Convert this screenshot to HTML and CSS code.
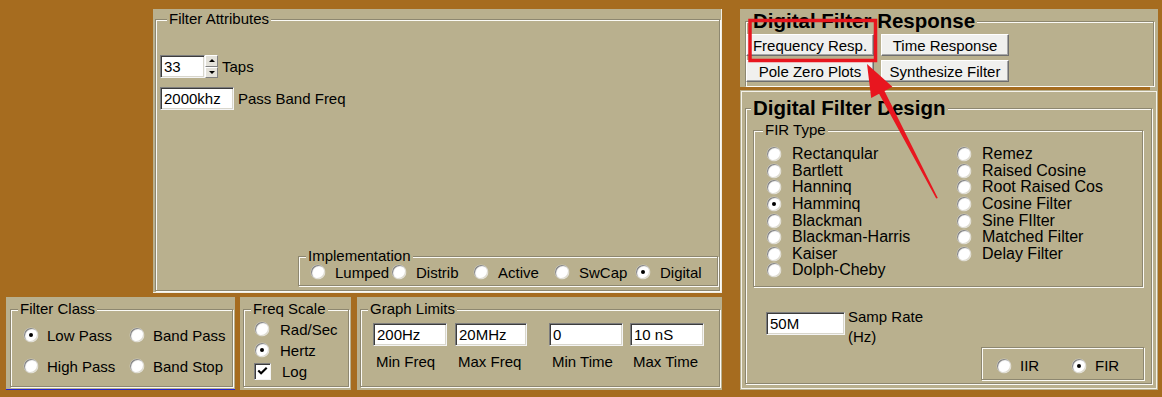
FILE: index.html
```html
<!DOCTYPE html>
<html>
<head>
<meta charset="utf-8">
<title>Digital Filter Design</title>
<link rel="stylesheet" href="styles.css">
</head>
<body>
<div class="app">
  <div class="left">
    <section class="panel attrs">
      <div class="group attrs-group">
        <div class="cap">Filter Attributes</div>
        <div class="field-row taps-row">
          <span class="input w45">33</span>
          <span class="spin"><span class="spin-btn up"></span><span class="spin-btn down"></span></span>
          <span class="lbl">Taps</span>
        </div>
        <div class="field-row pass-row">
          <span class="input w74">2000khz</span>
          <span class="lbl">Pass Band Freq</span>
        </div>
        <div class="group impl">
          <div class="cap">Implementation</div>
          <div class="impl-row">
            <span class="opt w81"><span class="radio"></span><span class="t">Lumped</span></span>
            <span class="opt w82"><span class="radio"></span><span class="t">Distrib</span></span>
            <span class="opt w81"><span class="radio"></span><span class="t">Active</span></span>
            <span class="opt w81"><span class="radio"></span><span class="t">SwCap</span></span>
            <span class="opt"><span class="radio on"></span><span class="t">Digital</span></span>
          </div>
        </div>
      </div>
    </section>

    <div class="bottom-row">
      <section class="panel class-panel">
        <div class="group class-group">
          <div class="cap">Filter Class</div>
          <div class="class-grid">
            <span class="opt"><span class="radio on"></span><span class="t">Low Pass</span></span>
            <span class="opt"><span class="radio"></span><span class="t">Band Pass</span></span>
            <span class="opt"><span class="radio"></span><span class="t">High Pass</span></span>
            <span class="opt"><span class="radio"></span><span class="t">Band Stop</span></span>
          </div>
        </div>
      </section>

      <section class="panel scale-panel">
        <div class="group scale-group">
          <div class="cap">Freq Scale</div>
          <div class="scale-list">
            <span class="opt"><span class="radio"></span><span class="t">Rad/Sec</span></span>
            <span class="opt"><span class="radio on"></span><span class="t">Hertz</span></span>
            <span class="opt chk-opt"><span class="check"><svg viewBox="0 0 16 16" width="16" height="16"><path d="M3.5 7.5 L6.5 10.5 L12.5 4.5" fill="none" stroke="#000" stroke-width="2.2"/></svg></span><span class="t">Log</span></span>
          </div>
        </div>
      </section>

      <section class="panel limits-panel">
        <div class="group limits-group">
          <div class="cap">Graph Limits</div>
          <div class="limits-row">
            <div class="limit"><span class="input w74">200Hz</span><span class="limit-lbl">Min Freq</span></div>
            <div class="limit g8"><span class="input w72">20MHz</span><span class="limit-lbl">Max Freq</span></div>
            <div class="limit g22"><span class="input w74">0</span><span class="limit-lbl">Min Time</span></div>
            <div class="limit g7"><span class="input w74">10 nS</span><span class="limit-lbl">Max Time</span></div>
          </div>
        </div>
      </section>
    </div>
  </div>

  <div class="right">
    <section class="panel response">
      <div class="group response-group">
        <div class="cap title">Digital Filter Response</div>
        <div class="btn-grid">
          <button class="btn">Frequency Resp.</button>
          <button class="btn">Time Response</button>
          <button class="btn">Pole Zero Plots</button>
          <button class="btn">Synthesize Filter</button>
        </div>
      </div>
    </section>
    <div class="sep"></div>
    <section class="panel design">
      <div class="group design-group">
        <div class="cap title design-title">Digital Filter Design</div>
        <div class="group fir">
          <div class="cap fir-cap">FIR Type</div>
          <div class="fir-grid">
            <span class="opt"><span class="radio"></span><span class="t">Rectanqular</span></span>
            <span class="opt"><span class="radio"></span><span class="t">Bartlett</span></span>
            <span class="opt"><span class="radio"></span><span class="t">Hanninq</span></span>
            <span class="opt"><span class="radio on"></span><span class="t">Hamminq</span></span>
            <span class="opt"><span class="radio"></span><span class="t">Blackman</span></span>
            <span class="opt"><span class="radio"></span><span class="t">Blackman-Harris</span></span>
            <span class="opt"><span class="radio"></span><span class="t">Kaiser</span></span>
            <span class="opt"><span class="radio"></span><span class="t">Dolph-Cheby</span></span>
            <span class="opt"><span class="radio"></span><span class="t">Remez</span></span>
            <span class="opt"><span class="radio"></span><span class="t">Raised Cosine</span></span>
            <span class="opt"><span class="radio"></span><span class="t">Root Raised Cos</span></span>
            <span class="opt"><span class="radio"></span><span class="t">Cosine Filter</span></span>
            <span class="opt"><span class="radio"></span><span class="t">Sine FIlter</span></span>
            <span class="opt"><span class="radio"></span><span class="t">Matched Filter</span></span>
            <span class="opt"><span class="radio"></span><span class="t">Delay Filter</span></span>
          </div>
        </div>
        <div class="samp-row">
          <span class="input w79">50M</span>
          <span class="samp-lbl">Samp Rate<br>(Hz)</span>
        </div>
        <div class="group mode">
          <span class="opt mode-iir"><span class="radio"></span><span class="t">IIR</span></span>
          <span class="opt"><span class="radio on"></span><span class="t">FIR</span></span>
        </div>
      </div>
    </section>
  </div>

  <svg class="annot" width="1162" height="397" viewBox="0 0 1162 397">
    <rect x="750" y="20.5" width="125.5" height="40" fill="none" stroke="#e8161f" stroke-width="3.5"/>
    <polygon fill="#e8161f" points="867,64 892.4,86.8 884.5,91 937.8,198 936.2,198.6 879.1,93.8 871.2,98"/>
  </svg>
</div>
</body>
</html>
```

FILE: styles.css
```css
* { box-sizing: border-box; }
html, body { margin: 0; padding: 0; }
body {
  background: #a66c1f;
  font-family: "Liberation Sans", Arial, sans-serif;
  font-size: 15px;
  color: #000;
  width: 1162px;
  height: 397px;
  overflow: hidden;
}
.app {
  position: relative;
  display: flex;
  padding-top: 9px;
  height: 397px;
}
.panel { background: #b9b08e; }

/* etched group box */
.group {
  border: 1px solid #8d8770;
  box-shadow: inset 1px 1px 0 #fbfaf5, 1px 1px 0 #fbfaf5;
}
.cap {
  display: table;
  margin: -9px 0 0 7px;
  padding: 0 2px;
  line-height: 16px;
  background: #b9b08e;
  white-space: nowrap;
}
.cap.title {
  font-weight: bold;
  font-size: 20.5px;
  line-height: 24px;
  margin: -13px 0 0 5px;
}

/* inputs */
.input {
  display: inline-block;
  height: 23px;
  background: #fff;
  border-top: 1px solid #7d7d7d;
  border-left: 1px solid #7d7d7d;
  border-right: 1px solid #f4f4f4;
  border-bottom: 1px solid #f4f4f4;
  box-shadow: inset 1px 1px 0 #3c3c3c, inset -1px -1px 0 #d8d6cc;
  padding: 2px 3px 0;
  line-height: 18px;
  white-space: nowrap;
}
.w45 { width: 45px; }
.w72 { width: 72px; }
.w74 { width: 74px; }
.w79 { width: 79px; }

/* radios */
.opt { display: inline-flex; align-items: center; white-space: nowrap; }
.radio {
  flex: none;
  position: relative;
  width: 14px;
  height: 14px;
  border-radius: 50%;
  background: #fff;
  box-shadow: inset 1px 1px 1px #7a7a7a, inset -1px -1px 0 #dedbd0, 0 0 0 0.5px #cfcab5;
}
.radio.on::after {
  content: "";
  position: absolute;
  left: 5px;
  top: 5px;
  width: 4px;
  height: 4px;
  border-radius: 50%;
  background: #000;
}
.check {
  flex: none;
  width: 17px;
  height: 17px;
  background: #fff;
  border-top: 1px solid #7d7d7d;
  border-left: 1px solid #7d7d7d;
  border-right: 1px solid #f4f4f4;
  border-bottom: 1px solid #f4f4f4;
  box-shadow: inset 1px 1px 0 #3c3c3c;
  display: flex;
  align-items: center;
  justify-content: center;
}

/* LEFT */
.left {
  display: flex;
  flex-direction: column;
  width: 722px;
  gap: 4px;
}
.attrs {
  margin-left: 153px;
  width: 569px;
  height: 284px;
  padding: 10px 2px 2px 2px;
  box-shadow: inset -1px -1px 0 #efede3;
}
.attrs-group { height: 100%; padding-left: 4px; }
.field-row { display: flex; align-items: center; }
.taps-row { margin-top: 28px; }
.pass-row { margin-top: 9px; }
.lbl { margin-left: 4px; }
.spin {
  display: flex;
  flex-direction: column;
  width: 13px;
  height: 23px;
}
.spin-btn {
  flex: 1;
  position: relative;
  background: #e4e2da;
  border: 1px solid;
  border-color: #fff #808080 #808080 #fff;
}
.spin-btn::after {
  content: "";
  position: absolute;
  left: 3px;
  border-left: 3px solid transparent;
  border-right: 3px solid transparent;
}
.spin-btn.up::after { top: 3px; border-bottom: 3px solid #000; }
.spin-btn.down::after { top: 3px; border-top: 3px solid #000; }

.impl {
  margin: 146px 0 0 138px;
  width: 420px;
  height: 30px;
}
.impl-row { display: flex; padding-left: 12px; margin-top: 0; height: 16px; }
.impl-row .opt { gap: 10px; }
.w81 { width: 81px; flex: none; }
.w82 { width: 82px; flex: none; }

.bottom-row {
  display: flex;
  height: 93px;
  padding-left: 6px;
}
.class-panel {
  width: 229px;
  padding: 12px 2px 2px 4px;
  border-bottom: 1px solid #2424d0;
}
.class-group { height: 100%; }
.class-grid {
  display: grid;
  grid-template-columns: 106px auto;
  grid-template-rows: 16px 16px;
  row-gap: 15px;
  margin-top: 10px;
  padding-left: 13px;
}
.class-grid .opt { gap: 9px; }

.scale-panel {
  margin-left: 5px;
  width: 111px;
  padding: 12px 2px 3px 3px;
}
.scale-group { height: 100%; }
.scale-list {
  display: flex;
  flex-direction: column;
  gap: 5px;
  margin-top: 4px;
  padding-left: 11px;
}
.scale-list .opt { gap: 11px; height: 16px; }
.scale-list .chk-opt { margin-left: -1px; gap: 11px; }

.limits-panel {
  margin-left: 6px;
  width: 365px;
  padding: 12px 2px 3px 3px;
}
.limits-group { height: 100%; }
.limits-row {
  display: flex;
  margin-top: 6px;
  padding-left: 12px;
}
.limit { display: flex; flex-direction: column; }
.g8 { margin-left: 8px; }
.g22 { margin-left: 22px; }
.g7 { margin-left: 7px; }
.limit-lbl { margin-top: 8px; padding-left: 3px; line-height: 16px; white-space: nowrap; }

/* RIGHT */
.right {
  margin-left: 18px;
  width: 418px;
  display: flex;
  flex-direction: column;
}
.response {
  height: 78px;
  padding: 12px 4px 1px 5px;
}
.response-group { height: 100%; border-bottom: none; }
.btn-grid {
  display: grid;
  grid-template-columns: 128px 128px;
  grid-template-rows: 22px 22px;
  column-gap: 7px;
  row-gap: 4px;
  margin-top: 1px;
}
.btn {
  font: inherit;
  margin: 0;
  padding: 0;
  height: 22px;
  background: #f0f0ee;
  color: #000;
  border: 1px solid;
  border-color: #fff #6e6e6e #6e6e6e #fff;
  box-shadow: inset -1px -1px 0 #a8a8a8;
  white-space: nowrap;
}
.sep {
  height: 3px;
  background: linear-gradient(to right, #a66c1f 410px, #b9b08e 410px);
}
.design {
  height: 300px;
  padding: 17px 5px 5px 4px;
  border: 1px solid #b9b08e;
  box-shadow: inset 0 0 0 1px #f4f2ea;
}
.design-group { height: 100%; }
.design-title { margin-left: 10px; }
.fir {
  margin: 10px 0 0 7px;
  width: 390px;
  height: 157px;
}
.fir-cap { margin-left: 9px; }
.fir-grid {
  display: grid;
  grid-auto-flow: column;
  grid-template-rows: repeat(8, 16.6px);
  grid-template-columns: 190px auto;
  margin-top: 8px;
  padding-left: 13px;
  font-size: 16px;
}
.fir-grid .opt { gap: 11px; }
.samp-row {
  display: flex;
  align-items: flex-start;
  height: 24px;
  margin: 25px 0 0 20px;
}
.samp-lbl { margin: -5px 0 0 3px; line-height: 20px; }
.mode {
  margin: 11px 0 0 235px;
  width: 163px;
  height: 33px;
  display: flex;
  align-items: center;
  padding: 4px 0 0 15px;
}
.mode .opt { gap: 9px; }
.mode-iir { width: 75px; }

.annot {
  position: absolute;
  left: 0;
  top: 0;
  pointer-events: none;
}
```
